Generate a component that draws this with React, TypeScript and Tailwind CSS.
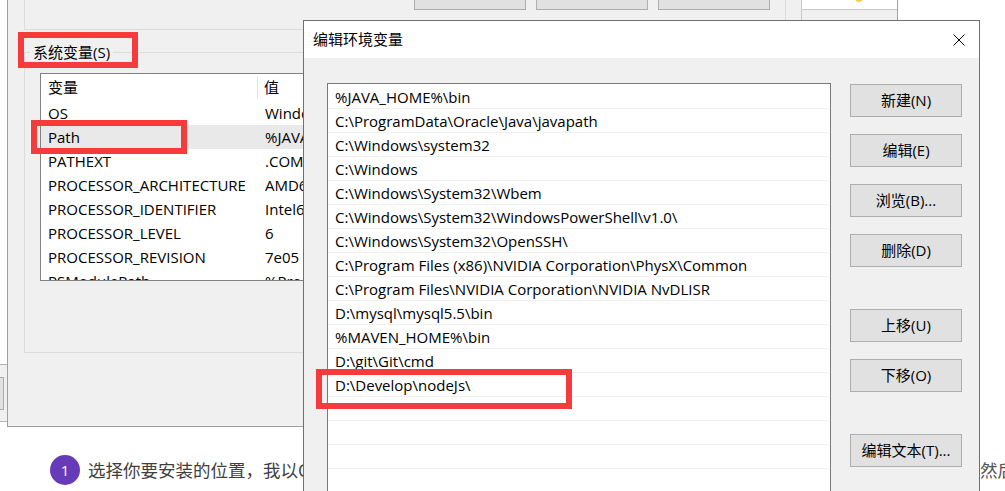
import React from "react";

const sysVars: [string, string][] = [
  ["OS", "Windows_NT"],
  ["Path", "%JAVA_HOME%\\bin;C:\\ProgramData\\Oracle"],
  ["PATHEXT", ".COM;.EXE;.BAT;.CMD;.VBS"],
  ["PROCESSOR_ARCHITECTURE", "AMD64"],
  ["PROCESSOR_IDENTIFIER", "Intel64 Family 6 Model 126"],
  ["PROCESSOR_LEVEL", "6"],
  ["PROCESSOR_REVISION", "7e05"],
  ["PSModulePath", "%ProgramFiles%\\WindowsPowerShell"],
];

const paths = [
  "%JAVA_HOME%\\bin",
  "C:\\ProgramData\\Oracle\\Java\\javapath",
  "C:\\Windows\\system32",
  "C:\\Windows",
  "C:\\Windows\\System32\\Wbem",
  "C:\\Windows\\System32\\WindowsPowerShell\\v1.0\\",
  "C:\\Windows\\System32\\OpenSSH\\",
  "C:\\Program Files (x86)\\NVIDIA Corporation\\PhysX\\Common",
  "C:\\Program Files\\NVIDIA Corporation\\NVIDIA NvDLISR",
  "D:\\mysql\\mysql5.5\\bin",
  "%MAVEN_HOME%\\bin",
  "D:\\git\\Git\\cmd",
  "D:\\Develop\\nodeJs\\",
  "",
  "",
  "",
  "",
];

// dialog side buttons, with the gap above each one
const sideButtons: [string, string][] = [
  ["新建(N)", "mt-[1px]"],
  ["编辑(E)", "mt-[17px]"],
  ["浏览(B)...", "mt-[17px]"],
  ["删除(D)", "mt-[17px]"],
  ["上移(U)", "mt-[42px]"],
  ["下移(O)", "mt-[17px]"],
  ["编辑文本(T)...", "mt-[42px]"],
];

const WinButton = ({ label, className = "" }: { label: string; className?: string }) => (
  <div
    className={`w-[112px] h-[33px] shrink-0 flex items-center justify-center bg-[#e1e1e1] border border-[#adadad] text-[15px] text-black ${className}`}
  >
    {label}
  </div>
);

const App: React.FC = () => {
  return (
    <div className="relative w-[1005px] h-[491px] overflow-hidden bg-white font-['Open_Sans','Noto_Sans_CJK_SC',sans-serif] text-black">
      {/* Article page behind the windows */}
      <div className="flex flex-col pt-[455px]">
        <div className="flex items-center h-[30px]">
          <div className="w-[980px] shrink-0 flex items-center pl-[50px]">
            <div className="w-[30px] h-[30px] rounded-full bg-[#673ab7] flex items-center justify-center text-white text-[15px]">
              1
            </div>
            <span className="ml-[8px] text-[17.5px] text-[#3f3f3f] whitespace-nowrap">
              选择你要安装的位置，我以C盘为例，点击下一步
            </span>
          </div>
          <span className="text-[17.5px] text-[#555] whitespace-nowrap">然后</span>
        </div>
      </div>

      {/* Window sliver on far left */}
      <div className="absolute left-0 top-[364px] w-[7px] h-[58px] bg-[#f0f0f0] border-t border-b border-[#b4b4b4] flex flex-col">
        <div className="mt-[12px] w-[4px] h-[33px] bg-[#e1e1e1] border-t border-r border-b border-[#adadad]" />
      </div>

      {/* Environment variables window (background) */}
      <div className="absolute left-[7px] top-0 w-[891px] h-[427px] bg-[#f0f0f0] border-l border-b border-r border-[#a0a0a0] flex">
        <div className="flex flex-col pl-[16px] w-[777px]">
          {/* user variables group (only its bottom visible) */}
          <div className="h-[30px] w-[761px] border-l border-b border-[#dcdcdc] flex gap-[10px] pl-[389px]">
            <WinButton label="新建(N)..." className="mt-[-23px] pb-[4px]" />
            <WinButton label="编辑(E)..." className="mt-[-23px] pb-[4px]" />
            <WinButton label="删除(D)" className="mt-[-23px] pb-[4px]" />
          </div>

          {/* system variables group */}
          <div className="relative mt-[22px] h-[301px] w-[761px] border-l border-t border-b border-[#dcdcdc]">
            <span className="absolute left-[5px] top-[-12px] px-[3px] bg-[#f0f0f0] text-[15px] leading-[22px]">
              系统变量(S)
            </span>
            <div className="ml-[15px] mt-[20px] w-[729px] h-[208px] border border-[#828282] bg-white overflow-hidden">
              <div className="flex h-[27px] text-[15px]">
                <div className="w-[217px] pl-[7px] flex items-center border-r border-[#e5e5e5] my-[2px]">变量</div>
                <div className="pl-[6px] flex items-center">值</div>
              </div>
              {sysVars.map(([name, value]) => (
                <div
                  key={name}
                  className={`flex h-[24px] items-center pt-[1px] text-[15px] whitespace-nowrap ${
                    name === "Path" ? "bg-[#e9e9e9]" : ""
                  }`}
                >
                  <div className="w-[217px] pl-[7px]">{name}</div>
                  <div className="pl-[7px]">{value}</div>
                </div>
              ))}
            </div>
          </div>
        </div>

        {/* strip on the right edge of the window */}
        <div className="w-[16px] h-[20px] border-l border-[#dcdcdc]" />
        <div className="flex-1 h-[20px] border-l border-[#c8c8c8] flex flex-col">
          <div className="h-[10px] bg-white border-b border-[#c8c8c8] flex justify-center overflow-hidden">
            <div className="ml-[18px] mt-[-6px] w-[8px] h-[8px] rounded-full bg-[#f8cc4a]" />
          </div>
        </div>
      </div>

      {/* Edit environment variable dialog */}
      <div className="absolute left-[303px] top-[20px] w-[677px] h-[500px] border border-[#707070] bg-[#f0f0f0] flex flex-col">
        <div className="h-[37px] bg-white flex items-center justify-between pl-[9px] pr-[14px]">
          <span className="text-[15px]">编辑环境变量</span>
          <svg width="12" height="12" viewBox="0 0 12 12" className="text-black">
            <path d="M0.5 0.5 L11.5 11.5 M11.5 0.5 L0.5 11.5" stroke="currentColor" strokeWidth="1" fill="none" />
          </svg>
        </div>
        <div className="flex pl-[23px] pt-[25px]">
          <div className="w-[504px] h-[420px] border border-[#7a7a7a] bg-white pt-[1px] flex flex-col">
            {paths.map((p, i) => (
              <div
                key={i}
                className="h-[24px] shrink-0 mr-[1px] border-b border-[#f0f0f0] flex items-center pl-[7px] pt-[2px] text-[15px] whitespace-nowrap"
              >
                {p}
              </div>
            ))}
          </div>
          <div className="ml-[19px] flex flex-col">
            {sideButtons.map(([label, gap]) => (
              <WinButton key={label} label={label} className={gap} />
            ))}
          </div>
        </div>
      </div>

      {/* red annotation boxes */}
      <div className="absolute left-[18px] top-[32px] w-[120px] h-[36px] border-[6px] border-[#f53b3b]" />
      <div className="absolute left-[31px] top-[120px] w-[156px] h-[34px] border-[6px] border-[#f53b3b]" />
      <div className="absolute left-[316px] top-[369px] w-[256px] h-[40px] border-[6px] border-[#f53b3b]" />
    </div>
  );
};

export default App;
